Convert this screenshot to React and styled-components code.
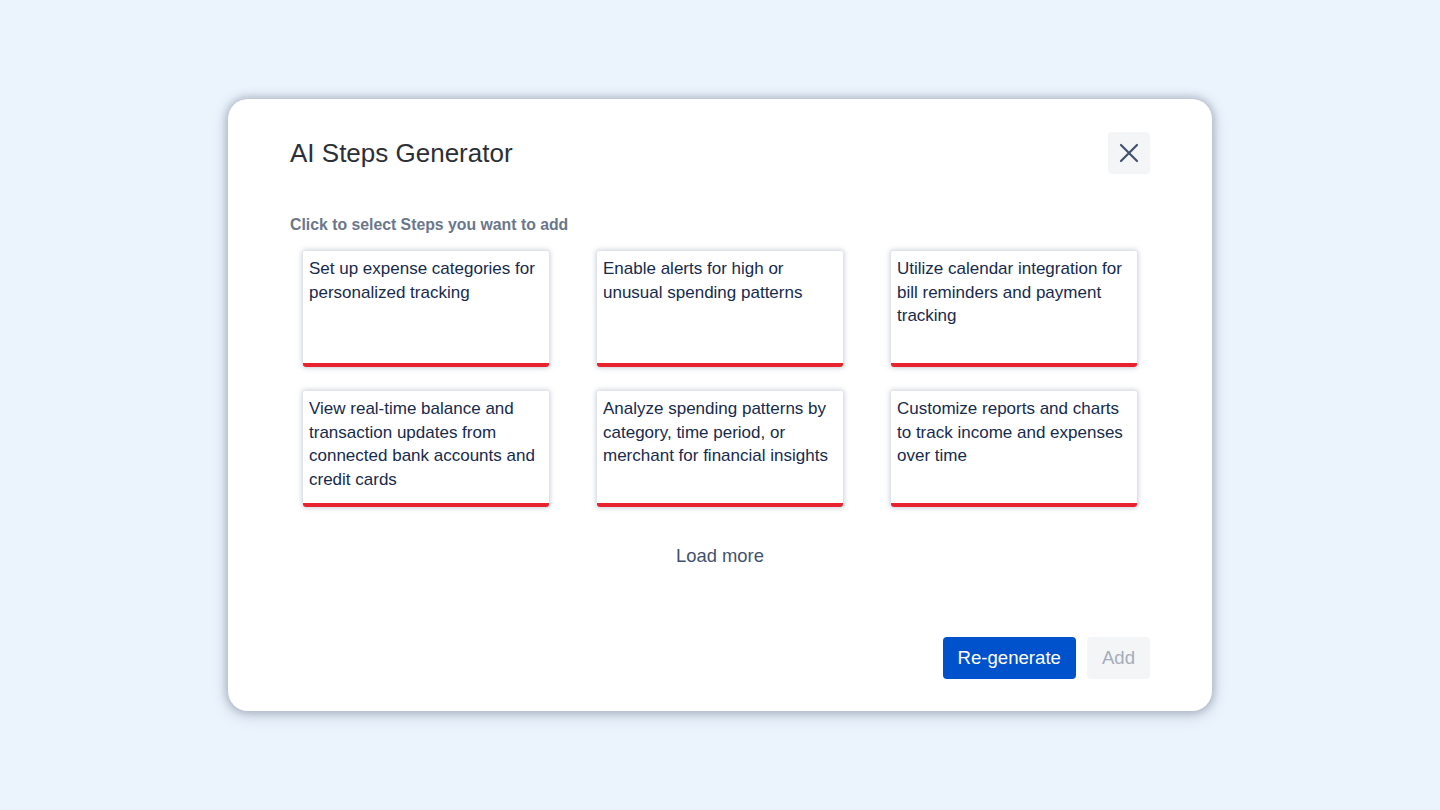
import React from 'react';
import styled, { createGlobalStyle } from 'styled-components';

const GlobalStyle = createGlobalStyle`
  html, body {
    margin: 0;
    padding: 0;
    background: #ebf4fd;
    font-family: "Liberation Sans", Arial, sans-serif;
  }
`;

const Page = styled.div`
  width: 1440px;
  height: 810px;
  display: flex;
  align-items: flex-start;
  justify-content: center;
  padding-top: 99px;
  box-sizing: border-box;
`;

const Modal = styled.div`
  width: 984px;
  height: 612px;
  background: #fff;
  border-radius: 20px;
  box-shadow: 0 0 7px 3px rgba(145, 155, 172, 0.5), 0 4px 16px rgba(120, 130, 150, 0.3);
  padding: 33px 62px 32px;
  box-sizing: border-box;
  display: flex;
  flex-direction: column;
`;

const Header = styled.div`
  display: flex;
  align-items: center;
  justify-content: space-between;
`;

const Title = styled.h1`
  margin: 0;
  font-size: 26px;
  font-weight: 400;
  color: #2c2f36;
`;

const CloseButton = styled.button`
  width: 42px;
  height: 42px;
  border: none;
  border-radius: 4px;
  background: #f4f5f7;
  display: flex;
  align-items: center;
  justify-content: center;
  padding: 0;
  cursor: pointer;
`;

const Subtitle = styled.div`
  margin-top: 42px;
  font-size: 15.8px;
  font-weight: 700;
  color: #6b778c;
`;

const Grid = styled.div`
  margin-top: 17px;
  padding: 0 13px;
  display: grid;
  grid-template-columns: repeat(3, 246px);
  column-gap: 48px;
  row-gap: 24px;
`;

const Card = styled.div`
  height: 116px;
  background: #fff;
  box-sizing: border-box;
  padding: 6px 6px 0;
  box-shadow: 0 0 5px 1px rgba(145, 155, 172, 0.5);
  border-bottom: 4px solid #e8222e;
  border-radius: 2px 2px 3px 3px;
  font-size: 17px;
  line-height: 23.6px;
  color: #172b4d;
  cursor: pointer;
`;

const LoadMore = styled.button`
  align-self: center;
  margin-top: 34px;
  background: none;
  border: none;
  font-family: inherit;
  font-size: 18.4px;
  color: #42526e;
  cursor: pointer;
  padding: 4px 8px;
`;

const Footer = styled.div`
  margin-top: auto;
  display: flex;
  justify-content: flex-end;
  gap: 11px;
`;

const Button = styled.button`
  height: 42px;
  border: none;
  border-radius: 4px;
  padding: 0 15px;
  font-family: inherit;
  font-size: 18.6px;
  background: ${({ $primary }) => ($primary ? '#0052cc' : '#f4f5f7')};
  color: ${({ $primary }) => ($primary ? '#fff' : '#a5adba')};
  cursor: ${({ $primary }) => ($primary ? 'pointer' : 'default')};
`;

const steps = [
  'Set up expense categories for personalized tracking',
  'Enable alerts for high or unusual spending patterns',
  'Utilize calendar integration for bill reminders and payment tracking',
  'View real-time balance and transaction updates from connected bank accounts and credit cards',
  'Analyze spending patterns by category, time period, or merchant for financial insights',
  'Customize reports and charts to track income and expenses over time',
];

export default function App() {
  return (
    <>
      <GlobalStyle />
      <Page>
        <Modal>
          <Header>
            <Title>AI Steps Generator</Title>
            <CloseButton aria-label="Close">
              <svg width="22" height="22" viewBox="0 0 22 22">
                <path d="M3 3 L19 19 M19 3 L3 19" stroke="#42526e" strokeWidth="2.2" strokeLinecap="round" />
              </svg>
            </CloseButton>
          </Header>
          <Subtitle>Click to select Steps you want to add</Subtitle>
          <Grid>
            {steps.map((s) => (
              <Card key={s}>{s}</Card>
            ))}
          </Grid>
          <LoadMore>Load more</LoadMore>
          <Footer>
            <Button $primary>Re-generate</Button>
            <Button disabled>Add</Button>
          </Footer>
        </Modal>
      </Page>
    </>
  );
}
